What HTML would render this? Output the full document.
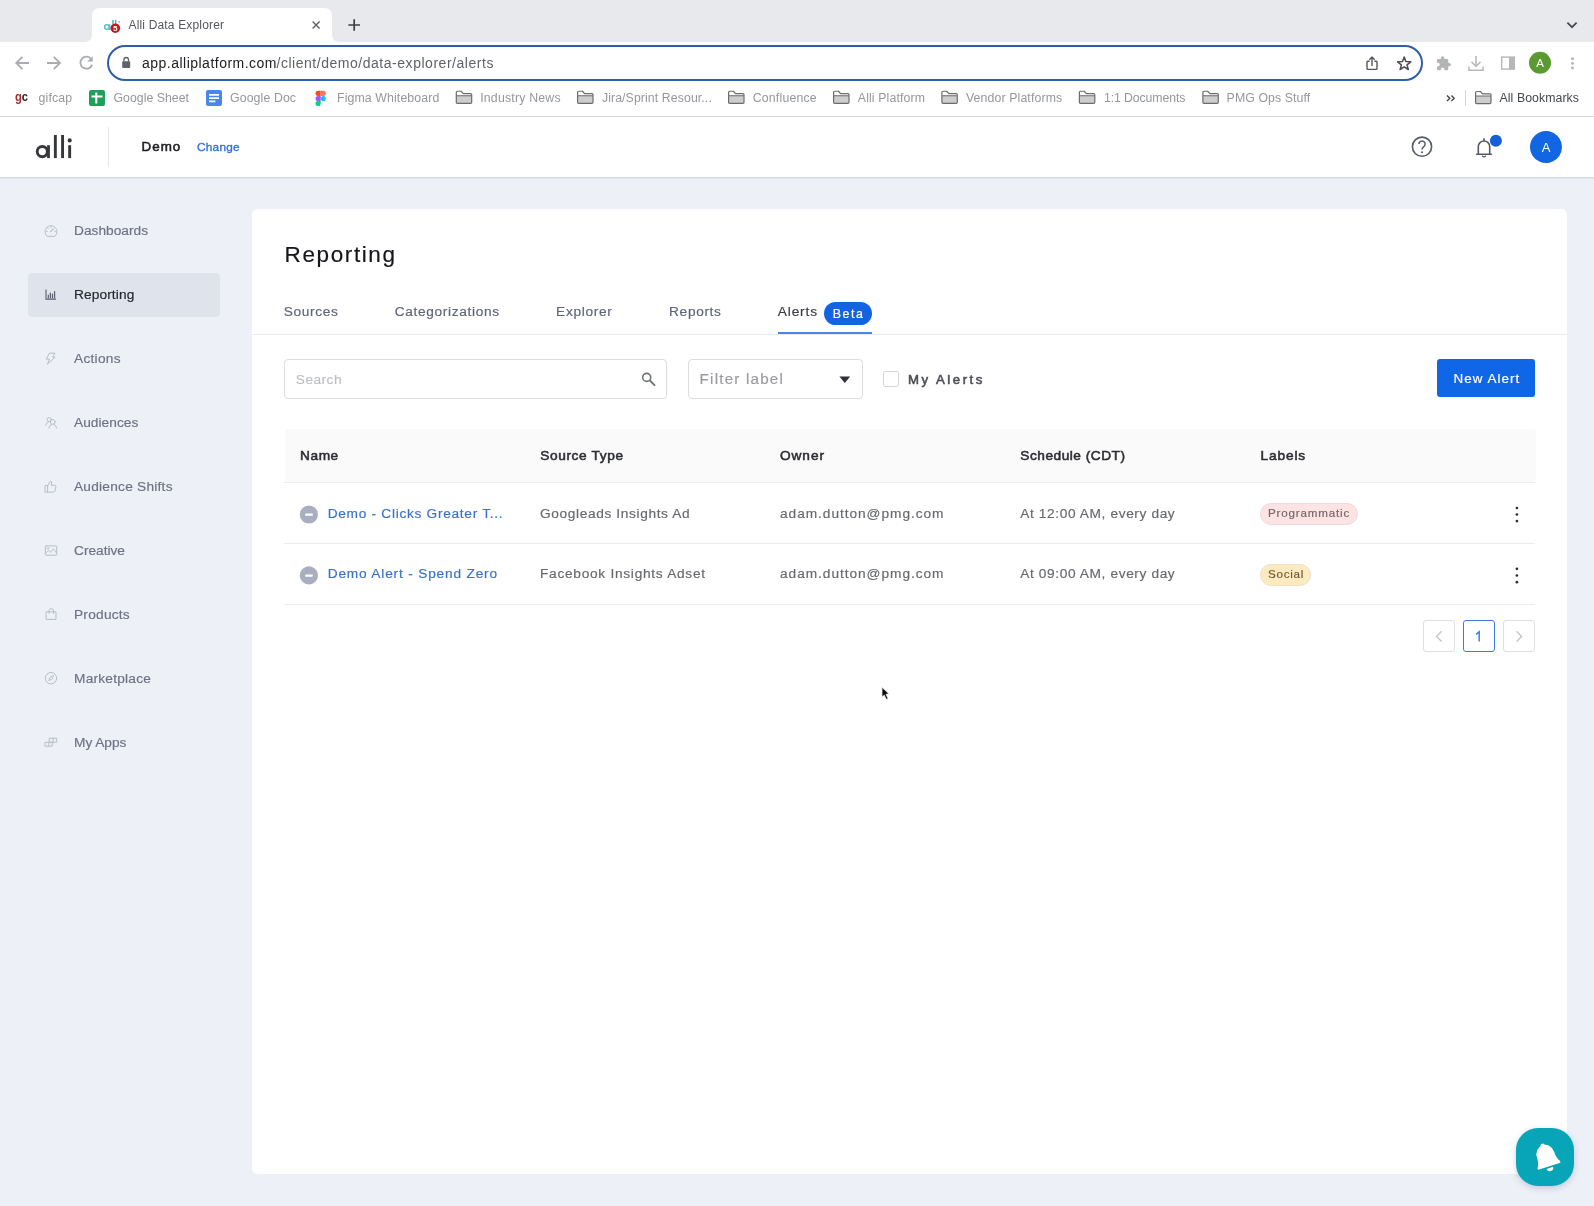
<!DOCTYPE html>
<html><head><meta charset="utf-8"><title>Alli Data Explorer</title>
<style>
*{box-sizing:border-box;margin:0;padding:0}
html,body{width:1594px;height:1206px;overflow:hidden;background:#edf0f7;font-family:"Liberation Sans",sans-serif;}
.abs,svg{position:absolute}
.t{position:absolute;white-space:nowrap;line-height:1}
#tabstrip{left:0;top:0;width:1594px;height:42px;background:#e7e9ed}
#tab{left:92px;top:8px;width:240px;height:34px;background:#fff;border-radius:9px 9px 0 0}
#toolbar{left:0;top:42px;width:1594px;height:74px;background:#fff}
#chromeline{left:0;top:116px;width:1594px;height:1px;background:#dadbde}
#url{left:107px;top:45px;width:1316px;height:36px;border:2px solid #2d5ea6;border-radius:18px;background:#fff}
#apphead{left:0;top:117px;width:1594px;height:60px;background:#fff;box-shadow:0 1px 1.5px rgba(110,120,150,.28)}
#card{left:252px;top:209px;width:1315px;height:965px;background:#fff;border-radius:6px}
.fold{width:17px;height:13px}
.box{border:1px solid #dcdddf;border-radius:4px;background:#fff}
.line{height:1px;background:#ececee}
#root{position:absolute;left:0;top:0;width:1594px;height:1206px;will-change:transform;transform:translateZ(0)}
</style></head><body><div id="root">
<div id="tabstrip" class="abs"></div>
<div id="toolbar" class="abs"></div>
<div id="chromeline" class="abs"></div>
<div id="url" class="abs"></div>
<svg width="1594" height="117" viewBox="0 0 1594 117" style="left:0;top:0">
<!-- tab -->
<path d="M84,42Q92,42 92,34V16Q92,8 100,8H324Q332,8 332,16V34Q332,42 340,42Z" fill="#fff"/>
<!-- favicon -->
<circle cx="106.9" cy="27" r="2.35" fill="none" stroke="#43bcc8" stroke-width="1.4"/>
<rect x="109.1" y="24.2" width="1.2" height="5.8" fill="#43bcc8"/>
<rect x="112.2" y="19.9" width="1.5" height="4" fill="#43bcc8"/><rect x="114.9" y="19.9" width="1.5" height="4" fill="#43bcc8"/>
<rect x="118.4" y="21.2" width="1.3" height="1.3" fill="#c96a6a"/>
<circle cx="115.3" cy="28.2" r="4.8" fill="#c4161c"/>
<text x="115.3" y="30.9" font-family="Liberation Sans, sans-serif" font-size="7.6" font-weight="700" fill="#fff" text-anchor="middle">5</text>
<!-- tab close / new tab / tab search -->
<path d="M312.6,21.6L319.6,28.6M319.6,21.6L312.6,28.6" stroke="#5f6368" stroke-width="1.4" fill="none"/>
<path d="M348.4,25H360M354.2,19.2V30.8" stroke="#3c4043" stroke-width="1.7" fill="none"/>
<path d="M1567.4,22.7L1572,27.2L1576.6,22.7" stroke="#45484d" stroke-width="1.7" fill="none"/>
<!-- nav arrows -->
<g stroke="#aaacaf" stroke-width="1.8" fill="none">
<path d="M29,63H16.6M22.4,56.8L16.2,63L22.4,69.2"/>
<path d="M47,63H59.6M53.8,56.8L60,63L53.8,69.2"/>
<path d="M91.3,59.2A6,6 0 1 0 92.1,64.6"/>
</g>
<path d="M92.7,56.3V61.6H87.4Z" fill="#aaacaf"/>
<!-- lock -->
<rect x="122.2" y="61.3" width="8" height="6.8" rx="1" fill="#5f6368"/>
<path d="M123.9,61.5V59.8A2.3,2.3 0 0 1 128.5,59.8V61.5" fill="none" stroke="#5f6368" stroke-width="1.3"/>
<!-- share -->
<g stroke="#55585d" stroke-width="1.4" fill="none" stroke-linejoin="round">
<path d="M1369.6,61.2H1367.8Q1367,61.2 1367,62V68.6Q1367,69.4 1367.8,69.4H1376.2Q1377,69.4 1377,68.6V62Q1377,61.2 1376.2,61.2H1374.4"/>
<path d="M1372,66V57.2M1369.3,59.7L1372,57L1374.7,59.7"/>
</g>
<!-- star -->
<path d="M1404.2,57.0L1405.9,61.6L1410.8,61.8L1407.0,64.8L1408.3,69.5L1404.2,66.8L1400.1,69.5L1401.4,64.8L1397.6,61.8L1402.5,61.6Z" fill="none" stroke="#494c50" stroke-width="1.5" stroke-linejoin="round"/>
<!-- puzzle -->
<g transform="translate(1435.6,55.6) scale(0.667)"><path fill="#b3b4b6" d="M20.5 11H19V7c0-1.1-.9-2-2-2h-4V3.5C13 2.12 11.88 1 10.5 1S8 2.12 8 3.5V5H4c-1.1 0-1.99.9-1.99 2v3.8H3.5c1.49 0 2.7 1.21 2.7 2.7s-1.21 2.7-2.7 2.7H2V20c0 1.1.9 2 2 2h3.8v-1.5c0-1.49 1.21-2.7 2.7-2.7 1.49 0 2.7 1.21 2.7 2.7V22H17c1.1 0 2-.9 2-2v-4h1.5c1.38 0 2.5-1.12 2.5-2.5S21.88 11 20.5 11z"/></g>
<!-- download -->
<g stroke="#b9babc" stroke-width="1.6" fill="none">
<path d="M1476,56V66M1471.4,61.8L1476,66.4L1480.6,61.8"/>
<path d="M1468.9,66.4V70.2H1483.1V66.4"/>
</g>
<!-- side panel -->
<rect x="1501.7" y="57.1" width="12.6" height="12" fill="none" stroke="#b6b7b9" stroke-width="1.4"/>
<rect x="1509" y="57.1" width="5.3" height="12" fill="#b6b7b9"/>
<!-- avatar -->
<circle cx="1540" cy="62.8" r="11" fill="#5b9a31"/>
<text x="1540" y="66.9" font-family="Liberation Sans, sans-serif" font-size="11.5" fill="#fff" text-anchor="middle">A</text>
<!-- menu dots -->
<g fill="#b3b4b6"><circle cx="1572.5" cy="58.8" r="1.45"/><circle cx="1572.5" cy="63.4" r="1.45"/><circle cx="1572.5" cy="68" r="1.45"/></g>
<!-- bookmarks -->
<text transform="translate(15,100.7) scale(0.82,1)" font-family="Liberation Sans, sans-serif" font-size="13.7" font-weight="700" fill="#a82b30">g<tspan fill="#26272a">c</tspan></text>
<rect x="89" y="90" width="16" height="16" rx="2" fill="#1fa05a"/>
<path d="M95.3,92.5h2v11h-2zM91.5,95.6h11v2h-11z" fill="#fff"/>
<rect x="206" y="90" width="16" height="16" rx="2" fill="#4b87e8"/>
<path d="M209,94h10v1.7h-10zM209,97.3h10v1.7h-10zM209,100.6h6.4v1.7h-6.4z" fill="#fff"/>
<!-- figma -->
<path d="M318.1,90.8H320.7V95.9H318.1A2.55,2.55 0 0 1 318.1,90.8Z" fill="#f24e1e"/>
<path d="M320.7,90.8H323.3A2.55,2.55 0 0 1 323.3,95.9H320.7Z" fill="#ff7262"/>
<path d="M318.1,95.9H320.7V101H318.1A2.55,2.55 0 0 1 318.1,95.9Z" fill="#a259ff"/>
<circle cx="323.3" cy="98.45" r="2.55" fill="#1abcfe"/>
<path d="M318.1,101H320.7V103.5A2.6,2.55 0 1 1 318.1,101Z" fill="#0acf83"/>
<g transform="translate(455.7,90.65)"><path d="M0.6,5.1H16V11.6Q16,12.8 14.8,12.8H1.8Q0.6,12.8 0.6,11.6Z" fill="#cdcdcd"/><path d="M0.6,1.8Q0.6,0.6 1.8,0.6H5.4L7.6,3H15Q16,3 16,4.2V11.6Q16,12.8 14.8,12.8H1.8Q0.6,12.8 0.6,11.6ZM0.6,5.1H16" fill="none" stroke="#6b6c6e" stroke-width="1.2" stroke-linejoin="round"/></g><g transform="translate(577,90.65)"><path d="M0.6,5.1H16V11.6Q16,12.8 14.8,12.8H1.8Q0.6,12.8 0.6,11.6Z" fill="#cdcdcd"/><path d="M0.6,1.8Q0.6,0.6 1.8,0.6H5.4L7.6,3H15Q16,3 16,4.2V11.6Q16,12.8 14.8,12.8H1.8Q0.6,12.8 0.6,11.6ZM0.6,5.1H16" fill="none" stroke="#6b6c6e" stroke-width="1.2" stroke-linejoin="round"/></g><g transform="translate(728,90.65)"><path d="M0.6,5.1H16V11.6Q16,12.8 14.8,12.8H1.8Q0.6,12.8 0.6,11.6Z" fill="#cdcdcd"/><path d="M0.6,1.8Q0.6,0.6 1.8,0.6H5.4L7.6,3H15Q16,3 16,4.2V11.6Q16,12.8 14.8,12.8H1.8Q0.6,12.8 0.6,11.6ZM0.6,5.1H16" fill="none" stroke="#6b6c6e" stroke-width="1.2" stroke-linejoin="round"/></g><g transform="translate(833,90.65)"><path d="M0.6,5.1H16V11.6Q16,12.8 14.8,12.8H1.8Q0.6,12.8 0.6,11.6Z" fill="#cdcdcd"/><path d="M0.6,1.8Q0.6,0.6 1.8,0.6H5.4L7.6,3H15Q16,3 16,4.2V11.6Q16,12.8 14.8,12.8H1.8Q0.6,12.8 0.6,11.6ZM0.6,5.1H16" fill="none" stroke="#6b6c6e" stroke-width="1.2" stroke-linejoin="round"/></g><g transform="translate(941.3,90.65)"><path d="M0.6,5.1H16V11.6Q16,12.8 14.8,12.8H1.8Q0.6,12.8 0.6,11.6Z" fill="#cdcdcd"/><path d="M0.6,1.8Q0.6,0.6 1.8,0.6H5.4L7.6,3H15Q16,3 16,4.2V11.6Q16,12.8 14.8,12.8H1.8Q0.6,12.8 0.6,11.6ZM0.6,5.1H16" fill="none" stroke="#6b6c6e" stroke-width="1.2" stroke-linejoin="round"/></g><g transform="translate(1078.8,90.65)"><path d="M0.6,5.1H16V11.6Q16,12.8 14.8,12.8H1.8Q0.6,12.8 0.6,11.6Z" fill="#cdcdcd"/><path d="M0.6,1.8Q0.6,0.6 1.8,0.6H5.4L7.6,3H15Q16,3 16,4.2V11.6Q16,12.8 14.8,12.8H1.8Q0.6,12.8 0.6,11.6ZM0.6,5.1H16" fill="none" stroke="#6b6c6e" stroke-width="1.2" stroke-linejoin="round"/></g><g transform="translate(1202.3,90.65)"><path d="M0.6,5.1H16V11.6Q16,12.8 14.8,12.8H1.8Q0.6,12.8 0.6,11.6Z" fill="#cdcdcd"/><path d="M0.6,1.8Q0.6,0.6 1.8,0.6H5.4L7.6,3H15Q16,3 16,4.2V11.6Q16,12.8 14.8,12.8H1.8Q0.6,12.8 0.6,11.6ZM0.6,5.1H16" fill="none" stroke="#6b6c6e" stroke-width="1.2" stroke-linejoin="round"/></g><g transform="translate(1475,90.9)"><path d="M0.6,5.1H16V11.6Q16,12.8 14.8,12.8H1.8Q0.6,12.8 0.6,11.6Z" fill="#cdcdcd"/><path d="M0.6,1.8Q0.6,0.6 1.8,0.6H5.4L7.6,3H15Q16,3 16,4.2V11.6Q16,12.8 14.8,12.8H1.8Q0.6,12.8 0.6,11.6ZM0.6,5.1H16" fill="none" stroke="#6b6c6e" stroke-width="1.2" stroke-linejoin="round"/></g>
<path d="M1447,95.5L1449.8,98.3L1447,101.1M1451.4,95.5L1454.2,98.3L1451.4,101.1" stroke="#45484d" stroke-width="1.4" fill="none"/>
<rect x="1465" y="90" width="1" height="15.8" fill="#d3d5d8"/>
</svg>
<div id="apphead" class="abs"></div>
<div class="abs" style="left:108px;top:127px;width:1px;height:40px;background:#e4e6ea"></div>
<div class="abs" style="left:28px;top:273px;width:192px;height:44px;background:#dfe3ec;border-radius:4px"></div>
<div id="card" class="abs"></div>
<!-- tabs line -->
<div class="abs" style="left:252px;top:334px;width:1315px;height:1px;background:#e9ebef"></div>
<div class="abs" style="left:778px;top:332px;width:94px;height:2px;background:#4a86e2"></div>
<div class="abs" style="left:824px;top:302px;width:48px;height:23px;border-radius:12px;background:#1464e2"></div>
<!-- search / filter -->
<div class="abs box" style="left:284px;top:359px;width:383px;height:40px"></div>
<div class="abs box" style="left:688px;top:359px;width:175px;height:40px"></div>
<div class="abs" style="left:883px;top:371px;width:16px;height:16px;border:1px solid #d5d7da;border-radius:2px;background:#fff"></div>
<div class="abs" style="left:1437px;top:359px;width:98px;height:38px;border-radius:3px;background:#0f66e6"></div>
<!-- table -->
<div class="abs" style="left:285px;top:429px;width:1251px;height:53px;background:#fafafa;border-radius:3px 3px 0 0"></div>
<div class="abs line" style="left:284px;top:482px;width:1251px"></div>
<div class="abs line" style="left:284px;top:543px;width:1251px"></div>
<div class="abs line" style="left:284px;top:604px;width:1251px"></div>
<div class="abs" style="left:1260px;top:502.5px;width:98px;height:22px;border-radius:11px;background:#fde4e2;border:1px solid #f1dad9"></div>
<div class="abs" style="left:1260px;top:563.5px;width:51px;height:22px;border-radius:11px;background:#fdeac0;border:1px solid #f1e1be"></div>
<!-- pagination -->
<div class="abs" style="left:1423px;top:620px;width:32px;height:32px;border:1px solid #dedfe2;border-radius:3px;background:#fff"></div>
<div class="abs" style="left:1463px;top:620px;width:32px;height:32px;border:1px solid #3b7be0;border-radius:3px;background:#fff"></div>
<div class="abs" style="left:1503px;top:620px;width:32px;height:32px;border:1px solid #dedfe2;border-radius:3px;background:#fff"></div>
<!-- floating button -->
<div class="abs" style="left:1516px;top:1128px;width:58px;height:58px;border-radius:22px;background:#08a4b7;box-shadow:0 2px 6px rgba(60,80,120,.25)"></div>
<svg width="1594" height="1206" viewBox="0 0 1594 1206" style="left:0;top:0">
<!-- alli logo -->
<g fill="#36373b">
<circle cx="42.3" cy="151.6" r="5.1" fill="none" stroke="#36373b" stroke-width="2.9"/>
<rect x="47.1" y="145.2" width="2.8" height="12.9"/>
<rect x="53.9" y="135" width="2.9" height="23.1"/>
<rect x="61.1" y="135" width="2.9" height="23.1"/>
<rect x="68.2" y="145.2" width="2.9" height="12.9"/>
<circle cx="69.7" cy="140.4" r="2.05"/>
</g>
<!-- help -->
<circle cx="1422" cy="146.7" r="9.6" fill="none" stroke="#555a66" stroke-width="1.6"/>
<path d="M1418.9,144.1A3.1,3.1 0 1 1 1423.6,146.8Q1422,147.8 1422,149.6" fill="none" stroke="#555a66" stroke-width="1.5"/>
<circle cx="1422" cy="152.3" r="1" fill="#555a66"/>
<!-- bell -->
<path d="M1476.6,154.2H1491.4M1478.3,154.2V146.6A5.7,5.7 0 0 1 1489.7,146.6V154.2M1484,140.9V138.9" fill="none" stroke="#555a66" stroke-width="1.6" stroke-linecap="round"/>
<path d="M1482.2,155.6A1.9,1.9 0 0 0 1485.8,155.6" fill="none" stroke="#555a66" stroke-width="1.4"/>
<circle cx="1495.9" cy="140.7" r="6" fill="#165fd8"/>
<!-- avatar -->
<circle cx="1546" cy="147" r="16" fill="#1266e3"/>
<text x="1546" y="151.6" font-family="Liberation Sans, sans-serif" font-size="13" fill="#fff" text-anchor="middle">A</text>
<g fill="none" stroke="#b8bdc9" stroke-width="1" stroke-linejoin="round" stroke-linecap="round">
<!-- dashboards gauge -->
<path d="M46.9,236.1A6,6 0 1 1 55.1,236.1Z"/>
<path d="M50.6,231.6L53.3,228.9" stroke-width="1.3"/>
<path d="M51,226.4V227.4M46.4,231.3H47.4M54.6,231.3H55.6M47.7,227.9L48.4,228.6" stroke-width="0.9"/>
<!-- actions bolt -->
<path d="M49.9,353.1H55L52.6,357.2H55.2L47.4,364.3L49.5,359.2H46.6Z"/>
<!-- audiences -->
<circle cx="49.2" cy="419.6" r="2.1"/><path d="M45.6,425.2Q46.3,422.6 48.3,422"/>
<circle cx="52.7" cy="421.9" r="2.4"/><path d="M48.8,428Q49.3,424.9 51.6,424.4M53.8,424.4Q56.1,424.9 56.6,428"/>
<!-- audience shifts thumb -->
<path d="M45.4,485.6H47.6V492.1H45.4Z"/>
<path d="M47.6,485.8L50.4,481.1Q51.9,481.2 51.7,483L51.3,485.3H54.7Q56.2,485.5 55.9,487L55,491Q54.7,492.1 53.6,492.1H47.6"/>
<!-- creative picture -->
<rect x="45.4" y="545.9" width="11.3" height="9.3" rx="0.6"/>
<path d="M45.6,553.3L48.6,550.3L50.6,552.4L53.4,548.9L56.5,552.8" stroke-width="0.9"/><circle cx="48" cy="548.3" r="0.7" stroke-width="0.8"/>
<!-- products bag -->
<path d="M46.5,611.8H56V619.4H46.5Z"/><path d="M49,613.4V611A2.25,2.4 0 0 1 53.5,611V613.4"/>
<!-- marketplace compass -->
<circle cx="51" cy="678.2" r="5.7"/>
<path d="M53.3,675.9L51.9,679.2L48.7,680.5L50.1,677.3Z" stroke-width="0.9"/>
<!-- my apps -->
<path d="M45.4,742.3H52.3V746.2H45.4ZM48.9,742.3V746.2M49.6,738.2H56.7V742.3H49.6ZM53.1,738.2V742.3"/>
</g>
<!-- reporting bars (selected, darker) -->
<g fill="none" stroke="#5a5f6e" stroke-width="1.1">
<path d="M46,289.6V299.1H56"/>
<path d="M48.3,295.2V297.8M50.4,293V297.8M52.5,294V297.8M54.6,291.6V297.8" stroke-width="1.2" stroke-linecap="round"/>
</g>
<!-- search icon -->
<circle cx="646.7" cy="377.4" r="4" fill="none" stroke="#6d7076" stroke-width="1.6"/>
<path d="M649.7,380.4L654.5,385.2" stroke="#6d7076" stroke-width="1.9" stroke-linecap="round"/>
<!-- caret -->
<path d="M839.4,376.6H850.2L844.8,383.1Z" fill="#2f3136"/>
<!-- minus circles -->
<circle cx="308.9" cy="514.5" r="9.1" fill="#a9afc1"/><rect x="305.2" y="513.5" width="7.6" height="2.3" rx="0.4" fill="#fff"/>
<circle cx="308.9" cy="575.4" r="9.1" fill="#a9afc1"/><rect x="305.2" y="574.4" width="7.6" height="2.3" rx="0.4" fill="#fff"/>
<!-- kebabs -->
<g fill="#2c2e33"><circle cx="1516.9" cy="508" r="1.35"/><circle cx="1516.9" cy="514.5" r="1.35"/><circle cx="1516.9" cy="521.1" r="1.35"/>
<circle cx="1516.9" cy="568.8" r="1.35"/><circle cx="1516.9" cy="575.5" r="1.35"/><circle cx="1516.9" cy="582.2" r="1.35"/></g>
<!-- pagination arrows -->
<path d="M1441.6,631.2L1436.6,636.4L1441.6,641.6" fill="none" stroke="#c6c8cb" stroke-width="1.5"/>
<path d="M1516.6,631.2L1521.6,636.4L1516.6,641.6" fill="none" stroke="#c6c8cb" stroke-width="1.5"/>
<path d="M1476.1,634.3L1479.2,631.8V641.4" fill="none" stroke="#3f7fe0" stroke-width="1.5"/>
<!-- float bell -->
<g transform="translate(1546.2,1156.6) rotate(-18) scale(1.13)" fill="#fff">
<path d="M-10.5,7.5Q-8,4 -8,-2A8,8.5 0 0 1 8,-2Q8,4 10.5,7.5Q11,9 9.5,9H-9.5Q-11,9 -10.5,7.5Z"/>
<circle cx="0" cy="-10" r="2"/>
<path d="M-3,10.5H3A3,3 0 0 1 -3,10.5Z"/>
</g>
<!-- cursor -->
<path d="M881.2,686.6V698.4L884.4,695.8L886.4,700.2L888.6,699.2L886.6,694.9L890.3,694.3Z" fill="#e9e9ea" opacity="0.8"/>
<path d="M882.1,687.6V696.8L884.3,694.9L886.3,699.3L887.9,698.5L885.9,694.2L888.7,693.7Z" fill="#0a0a0a" stroke="#fff" stroke-width="0.5" stroke-linejoin="round"/>
</svg>

<!-- text -->
<div class="t" style="left:128.5px;top:18.8px;font-size:12px;color:#54575c;letter-spacing:0.165px;">Alli Data Explorer</div>
<div class="t" style="left:142.0px;top:56.1px;font-size:14px;color:#202124;letter-spacing:0.485px;">app.alliplatform.com</div>
<div class="t" style="left:276.5px;top:56.1px;font-size:14px;color:#5f6368;letter-spacing:0.528px;">/client/demo/data-explorer/alerts</div>
<div class="t" style="left:38.6px;top:91.6px;font-size:12.3px;color:#95979a;letter-spacing:0.114px;">gifcap</div>
<div class="t" style="left:113.5px;top:91.6px;font-size:12.3px;color:#95979a;letter-spacing:0.026px;">Google Sheet</div>
<div class="t" style="left:230.0px;top:91.6px;font-size:12.3px;color:#95979a;letter-spacing:0.118px;">Google Doc</div>
<div class="t" style="left:337.0px;top:91.6px;font-size:12.3px;color:#95979a;letter-spacing:0.122px;">Figma Whiteboard</div>
<div class="t" style="left:480.2px;top:91.6px;font-size:12.3px;color:#95979a;letter-spacing:0.207px;">Industry News</div>
<div class="t" style="left:601.9px;top:91.6px;font-size:12.3px;color:#95979a;letter-spacing:0.096px;">Jira/Sprint Resour...</div>
<div class="t" style="left:752.7px;top:91.6px;font-size:12.3px;color:#95979a;letter-spacing:0.198px;">Confluence</div>
<div class="t" style="left:857.8px;top:91.6px;font-size:12.3px;color:#95979a;letter-spacing:0.133px;">Alli Platform</div>
<div class="t" style="left:965.9px;top:91.6px;font-size:12.3px;color:#95979a;letter-spacing:0.131px;">Vendor Platforms</div>
<div class="t" style="left:1103.9px;top:91.6px;font-size:12.3px;color:#95979a;letter-spacing:-0.093px;">1:1 Documents</div>
<div class="t" style="left:1226.6px;top:91.6px;font-size:12.3px;color:#95979a;letter-spacing:0.094px;">PMG Ops Stuff</div>
<div class="t" style="left:1499.5px;top:91.6px;font-size:12.3px;color:#45484d;letter-spacing:0.076px;">All Bookmarks</div>
<div class="t" style="left:141.5px;top:139.5px;font-size:13.4px;color:#1c1d21;-webkit-text-stroke:0.55px currentColor;letter-spacing:1.022px;">Demo</div>
<div class="t" style="left:197.0px;top:141.5px;font-size:11.8px;color:#3473d6;-webkit-text-stroke:0.35px currentColor;letter-spacing:0.254px;">Change</div>
<div class="t" style="left:74.0px;top:223.5px;font-size:13.7px;color:#6d7282;-webkit-text-stroke:0.18px currentColor;letter-spacing:0.021px;">Dashboards</div>
<div class="t" style="left:74.0px;top:287.5px;font-size:13.7px;color:#25272e;-webkit-text-stroke:0.18px currentColor;letter-spacing:0.118px;">Reporting</div>
<div class="t" style="left:74.0px;top:351.5px;font-size:13.7px;color:#6d7282;-webkit-text-stroke:0.18px currentColor;letter-spacing:0.268px;">Actions</div>
<div class="t" style="left:74.0px;top:415.5px;font-size:13.7px;color:#6d7282;-webkit-text-stroke:0.18px currentColor;letter-spacing:0.047px;">Audiences</div>
<div class="t" style="left:74.0px;top:479.5px;font-size:13.7px;color:#6d7282;-webkit-text-stroke:0.18px currentColor;letter-spacing:0.241px;">Audience Shifts</div>
<div class="t" style="left:74.0px;top:543.5px;font-size:13.7px;color:#6d7282;-webkit-text-stroke:0.18px currentColor;">Creative</div>
<div class="t" style="left:74.0px;top:607.5px;font-size:13.7px;color:#6d7282;-webkit-text-stroke:0.18px currentColor;letter-spacing:0.241px;">Products</div>
<div class="t" style="left:74.0px;top:671.5px;font-size:13.7px;color:#6d7282;-webkit-text-stroke:0.18px currentColor;letter-spacing:0.234px;">Marketplace</div>
<div class="t" style="left:74.0px;top:735.5px;font-size:13.7px;color:#6d7282;-webkit-text-stroke:0.18px currentColor;letter-spacing:-0.017px;">My Apps</div>
<div class="t" style="left:284.6px;top:243.9px;font-size:22.5px;color:#15161a;-webkit-text-stroke:0.2px currentColor;letter-spacing:1.605px;">Reporting</div>
<div class="t" style="left:283.8px;top:304.9px;font-size:13.7px;color:#5f6577;-webkit-text-stroke:0.18px currentColor;letter-spacing:0.630px;">Sources</div>
<div class="t" style="left:394.7px;top:304.9px;font-size:13.7px;color:#5f6577;-webkit-text-stroke:0.18px currentColor;letter-spacing:0.664px;">Categorizations</div>
<div class="t" style="left:556.1px;top:304.9px;font-size:13.7px;color:#5f6577;-webkit-text-stroke:0.18px currentColor;letter-spacing:0.676px;">Explorer</div>
<div class="t" style="left:669.1px;top:304.9px;font-size:13.7px;color:#5f6577;-webkit-text-stroke:0.18px currentColor;letter-spacing:0.644px;">Reports</div>
<div class="t" style="left:777.8px;top:305.4px;font-size:13.7px;color:#3a3d45;-webkit-text-stroke:0.2px currentColor;letter-spacing:0.840px;">Alerts</div>
<div class="t" style="left:832.7px;top:307.5px;font-size:12.4px;color:#ffffff;-webkit-text-stroke:0.2px currentColor;letter-spacing:1.533px;">Beta</div>
<div class="t" style="left:295.8px;top:372.6px;font-size:13.7px;color:#bdbfc3;-webkit-text-stroke:0.18px currentColor;letter-spacing:0.465px;">Search</div>
<div class="t" style="left:699.6px;top:371.0px;font-size:15.2px;color:#9a9b9e;-webkit-text-stroke:0.18px currentColor;letter-spacing:1.203px;">Filter label</div>
<div class="t" style="left:907.9px;top:372.7px;font-size:13.2px;color:#4b4d52;-webkit-text-stroke:0.55px currentColor;letter-spacing:2.533px;">My Alerts</div>
<div class="t" style="left:1453.6px;top:371.5px;font-size:13.4px;color:#ffffff;-webkit-text-stroke:0.2px currentColor;letter-spacing:1.036px;">New Alert</div>
<div class="t" style="left:300.1px;top:448.6px;font-size:13.7px;color:#2b2d32;-webkit-text-stroke:0.55px currentColor;letter-spacing:0.528px;">Name</div>
<div class="t" style="left:540.2px;top:448.6px;font-size:13.7px;color:#2b2d32;-webkit-text-stroke:0.55px currentColor;letter-spacing:0.629px;">Source Type</div>
<div class="t" style="left:780.0px;top:448.6px;font-size:13.7px;color:#2b2d32;-webkit-text-stroke:0.55px currentColor;letter-spacing:0.918px;">Owner</div>
<div class="t" style="left:1020.3px;top:448.6px;font-size:13.7px;color:#2b2d32;-webkit-text-stroke:0.55px currentColor;letter-spacing:0.506px;">Schedule (CDT)</div>
<div class="t" style="left:1260.5px;top:448.6px;font-size:13.7px;color:#2b2d32;-webkit-text-stroke:0.55px currentColor;letter-spacing:0.871px;">Labels</div>
<div class="t" style="left:327.7px;top:506.7px;font-size:13.7px;color:#3a72c9;-webkit-text-stroke:0.18px currentColor;letter-spacing:0.709px;">Demo - Clicks Greater T...</div>
<div class="t" style="left:540.0px;top:506.7px;font-size:13.7px;color:#67696d;-webkit-text-stroke:0.18px currentColor;letter-spacing:0.632px;">Googleads Insights Ad</div>
<div class="t" style="left:780.0px;top:506.7px;font-size:13.7px;color:#67696d;-webkit-text-stroke:0.18px currentColor;letter-spacing:0.957px;">adam.dutton@pmg.com</div>
<div class="t" style="left:1020.3px;top:506.7px;font-size:13.7px;color:#67696d;-webkit-text-stroke:0.18px currentColor;letter-spacing:0.614px;">At 12:00 AM, every day</div>
<div class="t" style="left:1268.0px;top:507.1px;font-size:11.6px;color:#77656a;-webkit-text-stroke:0.18px currentColor;letter-spacing:0.831px;">Programmatic</div>
<div class="t" style="left:327.7px;top:567.4px;font-size:13.7px;color:#3a72c9;-webkit-text-stroke:0.18px currentColor;letter-spacing:0.819px;">Demo Alert - Spend Zero</div>
<div class="t" style="left:540.0px;top:567.4px;font-size:13.7px;color:#67696d;-webkit-text-stroke:0.18px currentColor;letter-spacing:0.725px;">Facebook Insights Adset</div>
<div class="t" style="left:780.0px;top:567.4px;font-size:13.7px;color:#67696d;-webkit-text-stroke:0.18px currentColor;letter-spacing:0.957px;">adam.dutton@pmg.com</div>
<div class="t" style="left:1020.3px;top:567.4px;font-size:13.7px;color:#67696d;-webkit-text-stroke:0.18px currentColor;letter-spacing:0.614px;">At 09:00 AM, every day</div>
<div class="t" style="left:1268.0px;top:568.0px;font-size:11.6px;color:#6b5a38;-webkit-text-stroke:0.18px currentColor;letter-spacing:0.764px;">Social</div>
</div></body></html>
